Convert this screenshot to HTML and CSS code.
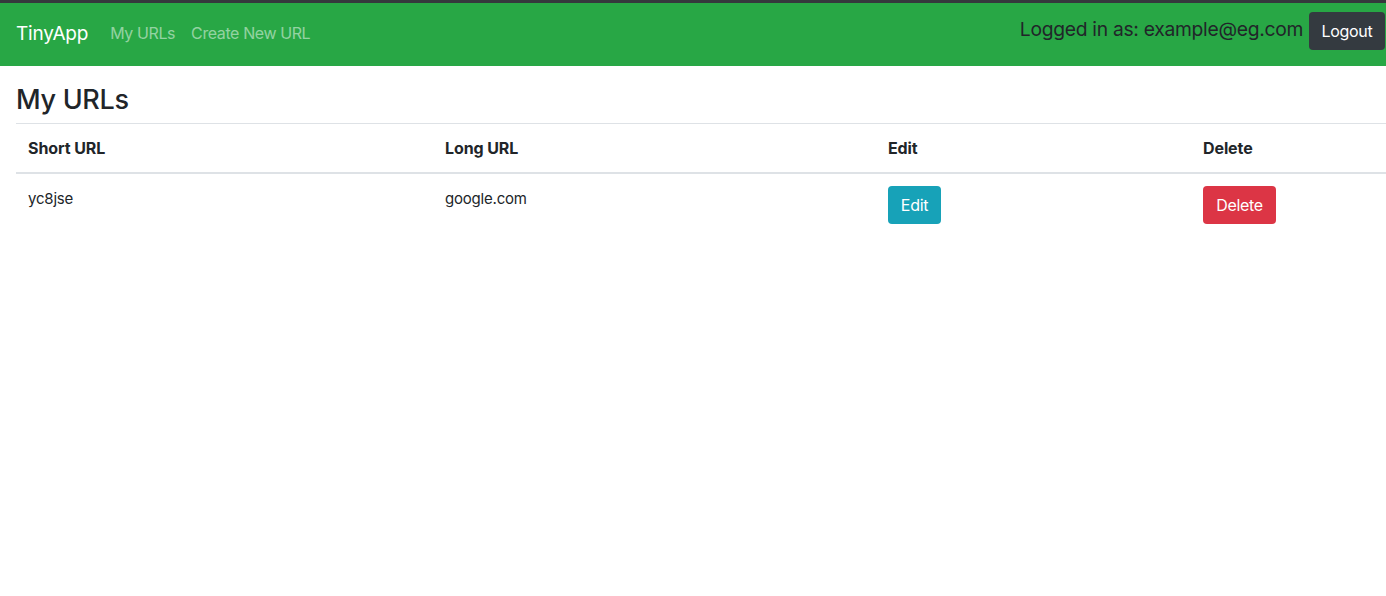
FILE: index.html
```html
<!DOCTYPE html>
<html>
<head>
<meta charset="utf-8">
<link rel="stylesheet" href="styles.css">
</head>
<body>
<nav class="navbar">
  <div class="nav-left">
    <a class="brand" href="#">TinyApp</a>
    <a class="nav-link" href="#">My URLs</a>
    <a class="nav-link" href="#">Create New URL</a>
  </div>
  <div class="nav-right">
    <span class="logged">Logged in as: example@eg.com</span>
    <button class="btn btn-dark">Logout</button>
  </div>
</nav>
<main class="content">
  <h3 class="title">My URLs</h3>
  <table class="table">
    <thead>
      <tr>
        <th class="c1">Short URL</th>
        <th class="c2">Long URL</th>
        <th class="c3">Edit</th>
        <th class="c4">Delete</th>
      </tr>
    </thead>
    <tbody>
      <tr>
        <td>yc8jse</td>
        <td>google.com</td>
        <td><button class="btn btn-info">Edit</button></td>
        <td><button class="btn btn-danger">Delete</button></td>
      </tr>
    </tbody>
  </table>
</main>
</body>
</html>
```
FILE: styles.css
```css
html, body {
  margin: 0;
  padding: 0;
}
body {
  font-family: Inter, "Liberation Sans", sans-serif;
  font-size: 16px;
  color: #212529;
  background: #fff;
  border-top: 3px solid #35383c;
  overflow-x: hidden;
}
.navbar {
  background: #28a745;
  height: 63px;
  display: flex;
  align-items: center;
  justify-content: space-between;
  padding-left: 16px;
  padding-right: 1px;
  box-sizing: border-box;
}
.nav-left {
  display: flex;
  align-items: center;
  margin-top: -3px;
}
.brand {
  color: #fff;
  font-size: 19px;
  text-decoration: none;
  margin-right: 22px;
  letter-spacing: -0.2px;
}
.nav-link {
  color: rgba(255,255,255,0.5);
  text-decoration: none;
  font-size: 16px;
  margin-right: 16px;
  letter-spacing: -0.4px;
}
.nav-right {
  display: flex;
  align-items: center;
  margin-top: -8px;
}
.logged {
  font-size: 19.3px;
  color: #212529;
  margin-right: 6px;
  letter-spacing: -0.3px;
  margin-top: -3px;
}
.btn {
  font-family: inherit;
  font-size: 16px;
  border: none;
  border-radius: 4px;
  color: #fff;
  height: 38px;
  padding: 0 12px;
  line-height: 38px;
  letter-spacing: -0.3px;
}
.btn-dark {
  background: #343a40;
  width: 76px;
  padding: 0;
}
.btn-info {
  background: #17a2b8;
  width: 53px;
  padding: 0;
}
.btn-danger {
  background: #dc3545;
  width: 73px;
  padding: 0;
}
.content {
  padding-left: 16px;
}
.title {
  font-size: 27px;
  font-weight: 500;
  margin: 0;
  padding-top: 17px;
  line-height: 34px;
  height: 40px;
  letter-spacing: -0.3px;
}
.table {
  border-collapse: collapse;
  width: 1370px;
  table-layout: fixed;
}
.table th, .table td {
  text-align: left;
  vertical-align: top;
  padding: 12px;
  border-top: 1px solid #dee2e6;
  font-size: 15px;
  letter-spacing: -0.2px;
}
.table th {
  font-weight: 700;
  font-size: 16px;
  letter-spacing: -0.1px;
  border-bottom: 2px solid #dee2e6;
  line-height: 24px;
}
.table td {
  border-top: none;
  line-height: 26px;
}
.c1 { width: 393px; }
.c2 { width: 419px; }
.c3 { width: 291px; }
.c4 { width: 171px; }
```
